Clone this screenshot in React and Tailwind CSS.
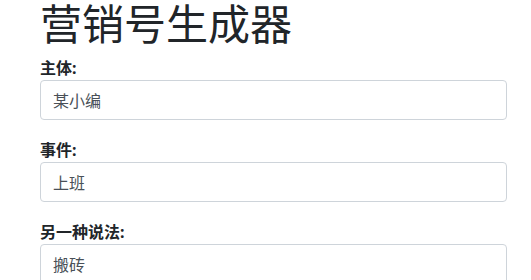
const fields = [
  { label: '主体:', value: '某小编' },
  { label: '事件:', value: '上班' },
  { label: '另一种说法:', value: '搬砖' },
];

export default function App() {
  return (
    <div
      className="min-h-screen bg-white pl-[40px] pr-[24px] text-[#212529]"
      style={{ fontFamily: '"Noto Sans", "Noto Sans CJK SC", sans-serif' }}
    >
      <h1 className="mb-2 text-[42px] font-normal leading-[48px]">营销号生成器</h1>
      {fields.map((f) => (
        <div key={f.label} className="mb-[18px]">
          <label className="block text-[16px] font-bold leading-[24px]">{f.label}</label>
          <input
            type="text"
            defaultValue={f.value}
            className="block h-[40px] w-full rounded-[4px] border border-[#ced4da] bg-white px-3 text-[16px] text-[#495057] outline-none"
          />
        </div>
      ))}
    </div>
  );
}
